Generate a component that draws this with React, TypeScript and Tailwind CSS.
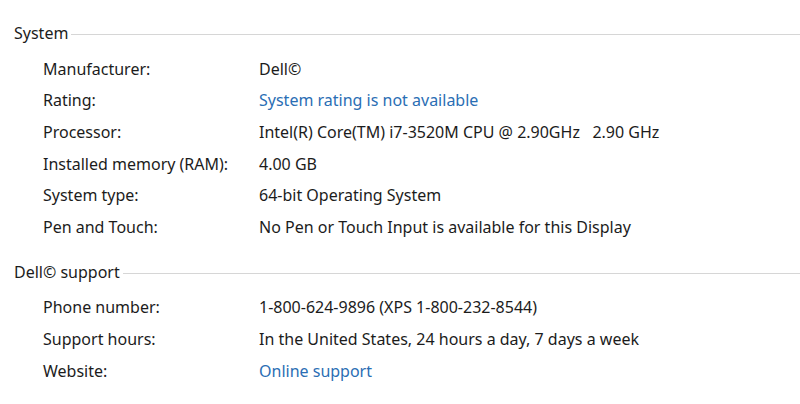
import React from 'react';

type Row = { label: string; value: string; link?: boolean };

const systemRows: Row[] = [
  { label: 'Manufacturer:', value: 'Dell©' },
  { label: 'Rating:', value: 'System rating is not available', link: true },
  { label: 'Processor:', value: 'Intel(R) Core(TM) i7-3520M CPU @ 2.90GHz   2.90 GHz' },
  { label: 'Installed memory (RAM):', value: '4.00 GB' },
  { label: 'System type:', value: '64-bit Operating System' },
  { label: 'Pen and Touch:', value: 'No Pen or Touch Input is available for this Display' },
];

const supportRows: Row[] = [
  { label: 'Phone number:', value: '1-800-624-9896 (XPS 1-800-232-8544)' },
  { label: 'Support hours:', value: 'In the United States, 24 hours a day, 7 days a week' },
  { label: 'Website:', value: 'Online support', link: true },
];

const Section = ({ title, rows }: { title: string; rows: Row[] }) => (
  <section>
    <div className="flex items-center h-[24px] pl-[14px]">
      <span className="whitespace-nowrap pr-[3px]">{title}</span>
      <div className="flex-1 h-px bg-[#d6d6d6] mt-[3px]" />
    </div>
    <div className="mt-[8px] pl-[43px]">
      {rows.map((r) => (
        <div key={r.label} className="flex items-center h-[31.6px]">
          <div className="w-[216px] shrink-0">{r.label}</div>
          <div className={r.link ? 'text-[#2a6eb4] whitespace-pre' : 'whitespace-pre'}>{r.value}</div>
        </div>
      ))}
    </div>
  </section>
);

export default function App() {
  return (
    <div
      className="w-[800px] h-[404px] bg-white text-[#1c1c1c] text-[16px] pt-[21px] overflow-hidden"
      style={{ fontFamily: '"Noto Sans", "Open Sans", sans-serif' }}
    >
      <Section title="System" rows={systemRows} />
      <div className="h-[17px]" />
      <Section title="Dell© support" rows={supportRows} />
    </div>
  );
}
